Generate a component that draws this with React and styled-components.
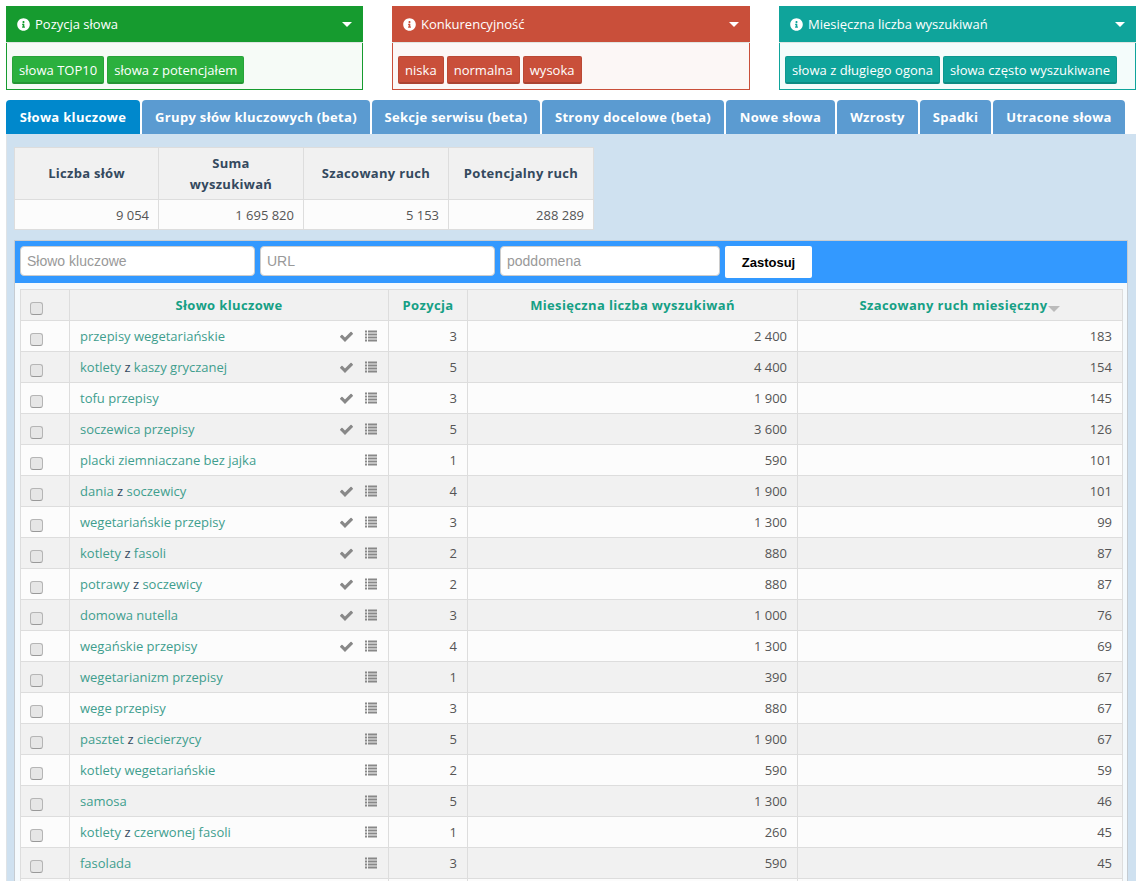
import React from "react";
import styled, { createGlobalStyle } from "styled-components";
import { FaInfoCircle } from "react-icons/fa";

const GlobalStyle = createGlobalStyle`
    html, body {
        margin: 0;
        padding: 0;
        background: #fff;
        height: 881px;
        overflow: hidden;
    }
    body {
        font-family: "Open Sans", sans-serif;
        font-size: 13px;
        color: #34495e;
    }
`;

const Page = styled.div`
    padding: 6px 8px 0 6px;
`;

const Filters = styled.div`
    display: grid;
    grid-template-columns: 357px 358px 357px;
    justify-content: space-between;
`;

const FilterBox = styled.div`
    border: 1px solid ${(p) => p.$color};
    background: ${(p) => p.$tint};
    height: 84px;
    box-sizing: border-box;
`;

const FilterHead = styled.div`
    height: 36px;
    margin: -1px -1px 0;
    padding: 0 11px 0 11px;
    display: flex;
    align-items: center;
    gap: 5px;
    background: ${(p) => p.$color};
    color: #fff;
    font-size: 13px;
    border-bottom: 1px solid #dfe5e2;
    box-sizing: content-box;
`;

const Caret = styled.span`
    margin-left: auto;
    border-top: 5px solid #fff;
    border-left: 5px solid transparent;
    border-right: 5px solid transparent;
`;

const FilterButtons = styled.div`
    display: flex;
    gap: 3px;
    padding: 13px 5px 0;
`;

const FilterButton = styled.button`
    height: 28px;
    padding: 0 6px;
    border: 1px solid rgba(0, 0, 0, 0.07);
    border-bottom: 2px solid rgba(0, 0, 0, 0.15);
    border-radius: 2px;
    background: ${(p) => p.$color};
    color: #fff;
    font: 13px "Open Sans", sans-serif;
    letter-spacing: 0.03px;
`;

const Tabs = styled.div`
    display: flex;
    gap: 2px;
    margin-top: 10px;
`;

const Tab = styled.div`
    width: ${(p) => p.$width}px;
    height: 34px;
    display: flex;
    align-items: center;
    justify-content: center;
    border-radius: 4px 4px 0 0;
    background: ${(p) => (p.$active ? "#0088cc" : "#5b9bd1")};
    color: #fff;
    font-weight: 700;
    font-size: 13px;
    letter-spacing: 0.32px;
`;

const Panel = styled.div`
    background: #cfe1f0;
    border-left: 1px solid #dfe3e6;
    padding: 14px 8px 0 7px;
    height: 760px;
    overflow: hidden;
`;

const SummaryTable = styled.table`
    border-collapse: collapse;
    table-layout: fixed;
    width: 579px;
    margin-top: -1px;

    th {
        background: #f1f1f1;
        border: 1px solid #ddd;
        height: 51px;
        padding: 0 8px;
        font-weight: 700;
        font-size: 13px;
        line-height: 21px;
        letter-spacing: 0.3px;
        color: #34495e;
    }

    td {
        background: #fcfcfc;
        border: 1px solid #ddd;
        height: 29px;
        padding: 0 9px;
        text-align: right;
        color: #555;
    }
`;

const SummaryCol = styled.col`
    width: ${(p) => p.$width}px;
`;

const ListBox = styled.div`
    margin-top: 10px;
    border: 1px solid #c6ccd2;
    border-bottom: 0;
    background: #f5fafd;
`;

const SearchBar = styled.div`
    background: #3399ff;
    height: 42px;
    padding: 5px 4px 5px 5px;
    box-sizing: border-box;
    display: flex;
    gap: 5px;
`;

const SearchInput = styled.input`
    width: ${(p) => p.$width}px;
    height: 30px;
    box-sizing: border-box;
    padding: 0 6px;
    border: 1px solid #ccc;
    border-radius: 4px;
    background: #fff;
    font: 14px "Liberation Sans", Arial, sans-serif;
    &::placeholder {
        color: #999;
        opacity: 1;
    }
`;

const ApplyButton = styled.button`
    width: 87px;
    height: 32px;
    border: 0;
    border-radius: 2px;
    background: #fff;
    color: #000;
    font: 700 13px "Liberation Sans", Arial, sans-serif;
`;

const KeywordTable = styled.table`
    border-collapse: collapse;
    table-layout: fixed;
    width: 1103px;
    margin: 6px 0 0 5px;

    th {
        height: 30px;
        padding: 0;
        background: #f1f1f1;
        border: 1px solid #ddd;
        color: #16a085;
        font-weight: 700;
        font-size: 13px;
        letter-spacing: 0.36px;
    }

    th:first-child {
        padding-left: 10px;
    }

    td {
        height: 30px;
        padding: 0 10px;
        border: 1px solid #ddd;
        text-align: right;
        color: #555;
    }

    tbody tr:nth-child(odd) td {
        background: #fcfcfc;
    }

    tbody tr:nth-child(even) td {
        background: #f1f1f1;
    }
`;

const KeywordCol = styled.col`
    width: ${(p) => (p.$width ? `${p.$width}px` : "auto")};
`;

const Check = styled.input.attrs({ type: "checkbox" })`
    appearance: none;
    display: block;
    width: 13px;
    height: 13px;
    margin: 6px 0 0 -1px;
    border: 1px solid #b5b5b5;
    border-bottom-color: #999;
    border-radius: 3px;
    background: #e6e6e6;
`;

const KeywordCell = styled.div`
    display: flex;
    align-items: center;
    color: #3f9e8e;

    i {
        font-style: normal;
        color: #34495e;
    }
`;

const KeywordIcons = styled.span`
    margin-left: auto;
    display: flex;
    align-items: center;
    color: #888;
    gap: 10px;
    margin-right: 1px;
`;

const SortMark = styled.span`
    display: inline-block;
    margin-left: 1px;
    border-top: 6px solid #bbb;
    border-left: 6px solid transparent;
    border-right: 6px solid transparent;
    vertical-align: -2px;
`;

function CheckIcon() {
    return (
        <svg width="15" height="15" viewBox="0 0 1792 1792" fill="currentColor">
            <path d="M1671 566q0 40-28 68l-724 724-136 136q-28 28-68 28t-68-28l-136-136-362-362q-28-28-28-68t28-68l136-136q28-28 68-28t68 28l294 295 656-657q28-28 68-28t68 28l136 136q28 28 28 68z" />
        </svg>
    );
}

function ListIcon() {
    return (
        <svg width="13" height="12" viewBox="0 0 13 12" fill="currentColor">
            {[0, 3, 6, 9].map((y) => (
                <g key={y}>
                    <rect x="1" y={y + 0.5} width="2" height="2" />
                    <rect x="4" y={y + 0.5} width="9" height="2" />
                </g>
            ))}
        </svg>
    );
}

const rows = [
    ["przepisy wegetariańskie", 1, "3", "2 400", "183"],
    ["kotlety |z| kaszy gryczanej", 1, "5", "4 400", "154"],
    ["tofu przepisy", 1, "3", "1 900", "145"],
    ["soczewica przepisy", 1, "5", "3 600", "126"],
    ["placki ziemniaczane bez jajka", 0, "1", "590", "101"],
    ["dania |z| soczewicy", 1, "4", "1 900", "101"],
    ["wegetariańskie przepisy", 1, "3", "1 300", "99"],
    ["kotlety |z| fasoli", 1, "2", "880", "87"],
    ["potrawy |z| soczewicy", 1, "2", "880", "87"],
    ["domowa nutella", 1, "3", "1 000", "76"],
    ["wegańskie przepisy", 1, "4", "1 300", "69"],
    ["wegetarianizm przepisy", 0, "1", "390", "67"],
    ["wege przepisy", 0, "3", "880", "67"],
    ["pasztet |z| ciecierzycy", 0, "5", "1 900", "67"],
    ["kotlety wegetariańskie", 0, "2", "590", "59"],
    ["samosa", 0, "5", "1 300", "46"],
    ["kotlety |z| czerwonej fasoli", 0, "1", "260", "45"],
    ["fasolada", 0, "3", "590", "45"],
    ["", 0, "", "", ""],
];

function Keyword({ text }) {
    const parts = text.split("|");
    return (
        <span>
            {parts.map((part, i) => (i === 1 ? <i key={i}>{part}</i> : part))}
        </span>
    );
}

function Filter({ title, color, tint, buttonColor, buttons }) {
    return (
        <FilterBox $color={color} $tint={tint}>
            <FilterHead $color={color}>
                <FaInfoCircle size={13} />
                {title}
                <Caret />
            </FilterHead>
            <FilterButtons>
                {buttons.map((b) => (
                    <FilterButton key={b} $color={buttonColor}>
                        {b}
                    </FilterButton>
                ))}
            </FilterButtons>
        </FilterBox>
    );
}

const tabs = [
    ["Słowa kluczowe", 134],
    ["Grupy słów kluczowych (beta)", 228],
    ["Sekcje serwisu (beta)", 168],
    ["Strony docelowe (beta)", 182],
    ["Nowe słowa", 109],
    ["Wzrosty", 81],
    ["Spadki", 71],
    ["Utracone słowa", 132],
];

export default function App() {
    return (
        <Page>
            <GlobalStyle />
            <Filters>
                <Filter
                    title="Pozycja słowa"
                    color="#169b2f"
                    tint="#f6fbf7"
                    buttonColor="#2bb03e"
                    buttons={["słowa TOP10", "słowa z potencjałem"]}
                />
                <Filter
                    title="Konkurencyjność"
                    color="#c94f3a"
                    tint="#fcf7f6"
                    buttonColor="#c94f3a"
                    buttons={["niska", "normalna", "wysoka"]}
                />
                <Filter
                    title="Miesięczna liczba wyszukiwań"
                    color="#0fa49b"
                    tint="#f4fcfb"
                    buttonColor="#0fa49b"
                    buttons={["słowa z długiego ogona", "słowa często wyszukiwane"]}
                />
            </Filters>
            <Tabs>
                {tabs.map(([label, width], i) => (
                    <Tab key={label} $width={width} $active={i === 0}>
                        {label}
                    </Tab>
                ))}
            </Tabs>
            <Panel>
                <SummaryTable>
                    <colgroup>
                        <SummaryCol $width={144} />
                        <SummaryCol $width={145} />
                        <SummaryCol $width={145} />
                        <SummaryCol $width={145} />
                    </colgroup>
                    <thead>
                        <tr>
                            <th>Liczba słów</th>
                            <th>
                                Suma
                                <br />
                                wyszukiwań
                            </th>
                            <th>Szacowany ruch</th>
                            <th>Potencjalny ruch</th>
                        </tr>
                    </thead>
                    <tbody>
                        <tr>
                            <td>9 054</td>
                            <td>1 695 820</td>
                            <td>5 153</td>
                            <td>288 289</td>
                        </tr>
                    </tbody>
                </SummaryTable>
                <ListBox>
                    <SearchBar>
                        <SearchInput $width={235} placeholder="Słowo kluczowe" />
                        <SearchInput $width={235} placeholder="URL" />
                        <SearchInput $width={220} placeholder="poddomena" />
                        <ApplyButton>Zastosuj</ApplyButton>
                    </SearchBar>
                    <KeywordTable>
                        <colgroup>
                            <KeywordCol $width={49} />
                            <KeywordCol $width={319} />
                            <KeywordCol $width={79} />
                            <KeywordCol $width={330} />
                            <KeywordCol />
                        </colgroup>
                        <thead>
                            <tr>
                                <th>
                                    <Check />
                                </th>
                                <th>Słowo kluczowe</th>
                                <th>Pozycja</th>
                                <th>Miesięczna liczba wyszukiwań</th>
                                <th>
                                    Szacowany ruch miesięczny
                                    <SortMark />
                                </th>
                            </tr>
                        </thead>
                        <tbody>
                            {rows.map((r, i) => (
                                <tr key={i}>
                                    <td>{i < 18 && <Check />}</td>
                                    <td>
                                        {i < 18 && (
                                            <KeywordCell>
                                                <Keyword text={r[0]} />
                                                <KeywordIcons>
                                                    {r[1] === 1 && <CheckIcon />}
                                                    <ListIcon />
                                                </KeywordIcons>
                                            </KeywordCell>
                                        )}
                                    </td>
                                    <td>{r[2]}</td>
                                    <td>{r[3]}</td>
                                    <td>{r[4]}</td>
                                </tr>
                            ))}
                        </tbody>
                    </KeywordTable>
                </ListBox>
            </Panel>
        </Page>
    );
}
